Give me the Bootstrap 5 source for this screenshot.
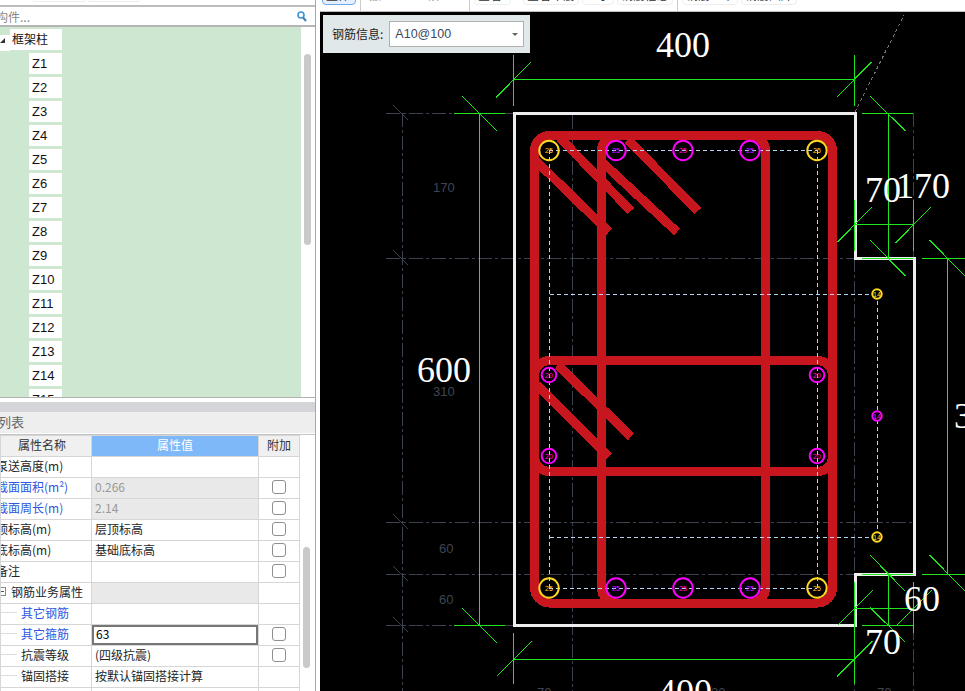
<!DOCTYPE html>
<html>

<head>
  <meta charset="utf-8">
  <meta name="viewport" content="width=device-width">
  <title>钢筋信息</title>
  <link href="https://cdn.jsdelivr.net/npm/bootstrap@5.3.2/dist/css/bootstrap.min.css" rel="stylesheet" type="text/css" />
  <style>
    html, body { height: 691px; overflow: hidden; }
    body { margin: 0; background: #fff; font: 12px/20px "Noto Sans CJK SC", sans-serif; color: #111; }

    .side-pane { width: 320px; height: 691px; flex: none; background: #fff; padding-right: 4px; }
    .side-inner { width: 316px; height: 691px; border-right: 1px solid #a8a8a8; overflow: hidden; }

    .pane-top { height: 7px; border-bottom: 2px solid #bdbdbd; padding-left: 33px; }
    .pane-tab { width: 52px; height: 2px; border: 1px solid #eee; border-top: 0; border-radius: 0 0 3px 3px; margin-right: 3px; }
    .search-row { height: 20px; border-bottom: 2px solid #b5b5b5; padding-right: 8px; }
    .search-text { color: #888; margin-left: -4px; line-height: 17px; }

    .tree-wrap { height: 371px; border-bottom: 1px solid #b0b0b0; }
    .tree-area { width: 301px; background: #cde7d0; padding-top: 2px; overflow: hidden; }
    .tree-row { height: 21px; margin-bottom: 3px; line-height: 21px; }
    .tree-arrow { width: 10px; height: 16px; margin-top: 6px; background: #fff; padding: 3px 0 0 0; }
    .tree-root { width: 52px; height: 21px; background: #fff; padding-left: 2px; line-height: 19px; }
    .tree-leaf { width: 33px; margin-left: 29px; background: #fff; padding-left: 3px; font-family: "Liberation Sans", sans-serif; font-size: 13px; }
    .scroll-track { width: 14px; padding: 0 4px 0 3px; }
    .scroll-thumb { background: #c9c9c9; border-radius: 4px; }
    .thumb-tree { height: 191px; margin-top: 27px; }
    .thumb-grid { height: 121px; margin-top: 112px; }

    .pane-split { height: 10px; margin-top: 4px; background: #d4d5d9; }
    .list-head { height: 21px; background: #eee; color: #666; font-size: 13px; line-height: 19px; margin-bottom: 1px; }
    .list-head span { margin-left: -2px; }
    .list-rule { height: 1px; background: #c4c4c4; }

    .grid-wrap { height: 256px; overflow: hidden; }
    .grid-box { width: 300px; flex: none; }
    .prop-grid { width: 300px; table-layout: fixed; border-collapse: collapse; }
    .prop-grid>:not(caption)>*>* { padding: 0 0 4px; height: 21px; border: 1px solid #d6d6d6; line-height: 15px; vertical-align: middle; white-space: nowrap; overflow: hidden; font-size: 12px; }
    .col-name { width: 91px; }
    .col-val { width: 167px; }
    .col-add { width: 41px; }
    .prop-grid>thead>tr>th { font-weight: 400; text-align: center; background: #f0f0f0; color: #333; }
    .prop-grid>thead>tr>th.head-name { padding-right: 8px; }
    .prop-grid>thead>tr>th.head-active { background: #7eb8f9; color: #fff; }
    .prop-grid>tbody>tr>td.cell-val { padding-left: 3px; }
    .prop-grid>tbody>tr>td.cell-muted { background: #e9e9e9; color: #999; }
    .prop-grid>tbody>tr>td.cell-edit { box-shadow: inset 0 0 0 2px #777; padding-left: 4px; color: #000; }
    .name-cut { display: block; margin-left: -5px; }
    .name-group { display: flex; align-items: center; }
    .name-child { display: flex; align-items: center; }
    .name-child::before { content: ""; width: 16px; margin-right: 4px; border-top: 1px solid #ddd; }
    .link-blue { color: #2f55e0; }
    .tree-minus { width: 5px; height: 9px; margin-right: 5px; border: 1px solid #888; border-left: 0; position: relative; }
    .tree-minus::after { content: ""; position: absolute; left: 0; top: 3px; width: 3px; border-top: 1px solid #555; }
    .form-check-input.add-check { display: block; width: 14px; height: 14px; margin: 1px auto -1px; border: 1px solid #8f8f8f; border-radius: 3px; }

    .main-pane { width: 645px; height: 691px; flex: none; }
    .tool-strip { height: 12px; border-bottom: 1px solid #bcbcbc; padding: 0 0 6px 2px; background: #fff; gap: 3px; }
    .tool-btn { flex: none; height: 22px; padding: 0 3px; border: 1px solid #eee; border-radius: 0 0 4px 4px; font-size: 12px; color: #333; display: flex; align-items: flex-end; overflow: hidden; }
    .tool-btn span { line-height: 14px; margin-bottom: 2px; }
    .tool-btn.tool-on { border-color: #6aa8f0; background: #e4f0ff; width: 34px; }
    .tool-btn.tool-plain { border-color: transparent; color: #999; }
    .tool-plain-a { width: 55px; }
    .tool-plain-b { width: 42px; }
    .tool-first { width: 37px; margin-right: 9px; }
    .tool-sep { flex: none; width: 1px; height: 11px; background: #ccc; margin: 0 1px; align-self: flex-start; }

    .cad-canvas { height: 679px; background: #000; }
    .cad-canvas svg { display: block; }
    .info-box { position: absolute; left: 3px; top: 3px; width: 207px; height: 38px; background: #e1e8ea; padding: 6px 6px 6px 9px; gap: 6px; }
    .info-label { font-size: 12px; line-height: 26px; color: #222; white-space: nowrap; }
    .info-select { width: 135px; flex: none; height: 26px; background: #fff; border: 1px solid #b0b0b0; padding: 0 5px; font: 12.5px/24px "Liberation Sans", sans-serif; color: #3a4a60; }
    .info-caret { width: 0; height: 0; border-left: 3px solid transparent; border-right: 3px solid transparent; border-top: 3px solid #666; }

    .ln { fill: none; shape-rendering: crispEdges; }
    .ln-green { stroke: #1fe61f; stroke-width: 1; }
    .ln-axis { stroke: #3c4250; stroke-width: 1; stroke-dasharray: 14 3 3 3; }
    .ln-tick { stroke: #3c4250; stroke-width: 1; }
    .ln-hint { stroke: #777; stroke-width: 1; stroke-dasharray: 3 3; }
    .ln-wall { stroke: #eee; stroke-width: 3; }
    .ln-bar { stroke: #c8161f; stroke-width: 9; }
    .ln-hook { stroke: #c8161f; stroke-width: 9; }
    .ln-steel { stroke: #b9d2f5; stroke-width: 1; stroke-dasharray: 4 3; }
    .bar-hole { fill: #000; }
    .ring { fill: none; stroke-width: 2; }
    .ring-y { stroke: #ffd820; }
    .ring-m { stroke: #ff00ff; }
    .tag { font: 7px "Liberation Sans", sans-serif; text-anchor: middle; }
    .tag-y { fill: #ffd820; }
    .tag-m { fill: #ff00ff; }
    .dim-big { font: 36px "Liberation Serif", serif; fill: #fff; }
    .dim-small { font: 13px "Liberation Sans", sans-serif; fill: #3f4552; }
  </style>
</head>

<body class="d-flex">
  <aside class="side-pane">
    <div class="side-inner d-flex flex-column">
      <div class="pane-top d-flex">
        <div class="pane-tab"></div>
        <div class="pane-tab"></div>
      </div>
      <div class="search-row d-flex justify-content-between align-items-center">
        <span class="search-text">构件...</span>
        <svg width="10" height="11" viewBox="0 0 10 11">
          <circle cx="4" cy="4" r="3" fill="none" stroke="#3a96d6" stroke-width="1.6" />
          <path d="M6 6.5L9 10" stroke="#3a7fb5" stroke-width="2" />
        </svg>
      </div>

      <div class="tree-wrap d-flex">
        <div class="tree-area">
          <div class="tree-row d-flex align-items-start">
            <div class="tree-arrow">
              <svg class="d-block" width="6" height="6" viewBox="0 0 6 6">
                <path d="M0 5H5V0Z" fill="#333" />
              </svg>
            </div>
            <div class="tree-root">框架柱</div>
          </div>
          <div class="tree-row tree-leaf">Z1</div>
          <div class="tree-row tree-leaf">Z2</div>
          <div class="tree-row tree-leaf">Z3</div>
          <div class="tree-row tree-leaf">Z4</div>
          <div class="tree-row tree-leaf">Z5</div>
          <div class="tree-row tree-leaf">Z6</div>
          <div class="tree-row tree-leaf">Z7</div>
          <div class="tree-row tree-leaf">Z8</div>
          <div class="tree-row tree-leaf">Z9</div>
          <div class="tree-row tree-leaf">Z10</div>
          <div class="tree-row tree-leaf">Z11</div>
          <div class="tree-row tree-leaf">Z12</div>
          <div class="tree-row tree-leaf">Z13</div>
          <div class="tree-row tree-leaf">Z14</div>
          <div class="tree-row tree-leaf">Z15</div>
        </div>
        <div class="scroll-track">
          <div class="scroll-thumb thumb-tree"></div>
        </div>
      </div>

      <div class="pane-split"></div>
      <div class="list-head"><span>列表</span></div>
      <div class="list-rule"></div>

      <div class="grid-wrap d-flex">
        <div class="grid-box">
          <table class="table prop-grid mb-0">
            <colgroup>
              <col class="col-name">
              <col class="col-val">
              <col class="col-add">
            </colgroup>
            <thead>
              <tr>
                <th class="head-name">属性名称</th>
                <th class="head-active">属性值</th>
                <th>附加</th>
              </tr>
            </thead>
            <tbody>
              <tr>
                <td><span class="name-cut">泵送高度(m)</span></td>
                <td class="cell-val"></td>
                <td></td>
              </tr>
              <tr>
                <td><span class="name-cut link-blue">截面面积(m²)</span></td>
                <td class="cell-val cell-muted">0.266</td>
                <td><input class="form-check-input add-check" type="checkbox"></td>
              </tr>
              <tr>
                <td><span class="name-cut link-blue">截面周长(m)</span></td>
                <td class="cell-val cell-muted">2.14</td>
                <td><input class="form-check-input add-check" type="checkbox"></td>
              </tr>
              <tr>
                <td><span class="name-cut">顶标高(m)</span></td>
                <td class="cell-val">层顶标高</td>
                <td><input class="form-check-input add-check" type="checkbox"></td>
              </tr>
              <tr>
                <td><span class="name-cut">底标高(m)</span></td>
                <td class="cell-val">基础底标高</td>
                <td><input class="form-check-input add-check" type="checkbox"></td>
              </tr>
              <tr>
                <td><span class="name-cut">备注</span></td>
                <td class="cell-val"></td>
                <td><input class="form-check-input add-check" type="checkbox"></td>
              </tr>
              <tr>
                <td><span class="name-group"><span class="tree-minus"></span>钢筋业务属性</span></td>
                <td class="cell-val cell-muted"></td>
                <td></td>
              </tr>
              <tr>
                <td><span class="name-child link-blue">其它钢筋</span></td>
                <td class="cell-val"></td>
                <td></td>
              </tr>
              <tr>
                <td><span class="name-child link-blue">其它箍筋</span></td>
                <td class="cell-edit">63</td>
                <td><input class="form-check-input add-check" type="checkbox"></td>
              </tr>
              <tr>
                <td><span class="name-child">抗震等级</span></td>
                <td class="cell-val">(四级抗震)</td>
                <td><input class="form-check-input add-check" type="checkbox"></td>
              </tr>
              <tr>
                <td><span class="name-child">锚固搭接</span></td>
                <td class="cell-val">按默认锚固搭接计算</td>
                <td></td>
              </tr>
              <tr>
                <td></td>
                <td class="cell-val"></td>
                <td></td>
              </tr>
            </tbody>
          </table>
        </div>
        <div class="scroll-track">
          <div class="scroll-thumb thumb-grid"></div>
        </div>
      </div>
    </div>
  </aside>

  <main class="main-pane d-flex flex-column">
    <div class="tool-strip d-flex align-items-end">
      <div class="tool-btn tool-on"><span>整体</span></div>
      <div class="tool-sep"></div>
      <div class="tool-btn tool-plain tool-plain-a"><span>撤</span></div>
      <div class="tool-btn tool-plain tool-plain-b"><span>恢</span></div>
      <div class="tool-sep"></div>
      <div class="tool-btn tool-first"><span>查看</span></div>
      <div class="tool-btn"><span>查看布筋</span></div>
      <div class="tool-btn"><span>显示</span></div>
      <div class="tool-btn"><span>钢筋信息</span></div>
      <div class="tool-sep"></div>
      <div class="tool-btn"><span>钢筋三维</span></div>
      <div class="tool-btn"><span>钢筋图库</span></div>
    </div>

    <div class="cad-canvas position-relative">
      <svg width="645" height="679" viewBox="320 12 645 679">
        <!-- axis lines -->
        <path class="ln ln-axis" d="M386 113.5H513M386 258.5H855M386 522.5H913M386 574.5H913M386 625.5H513M402.5 113V691M572.5 115V691M854.5 258V691M913.5 113V258M913.5 626V691" />
        <path class="ln ln-tick" d="M393 105L408 120M393 250L408 265M393 514L408 529M393 566L408 581M393 617L408 632" />
        <path class="ln ln-hint" d="M855 112L904 15" />

        <!-- section outline -->
        <path class="ln ln-wall" d="M514.5 113.5H855V258.5H914V574.5H855V625.5H514.5Z" />

        <!-- dimension lines -->
        <path class="ln ln-green" d="M513.5 79.5H854.5M513.5 55V106M854.5 55V106M496 97.5L531 62M836.5 97.5L871.5 62
          M479.5 113.5V625.5M454 113.5H505M462.5 96.5L497.5 131.5M454 625.5H505M462.5 608.5L497.5 643.5
          M513.5 659.5H854.5M513.5 633V684M496.5 676.5L531.5 641.5M854.5 582V684M837 676.5L872.5 641
          M854.5 608.5H913.5M913.5 582V633M838 625L873 590M897 625L932 590
          M888.5 574.5V625.5M862 574.5H913M862 625.5H913M870 555L905.5 591.5M870 607.5L905.5 642.5
          M947.5 258.5V574.5M922 574.5H965M922 258.5H965M929.5 555L965 591M929.5 240L965 276
          M862 113.5H913M888.5 113.5V258.5M862 258.5H913M870 96L905.5 131M870 240L905.5 276
          M854.5 224.5H913.5M854.5 200V251M913.5 200V251M837.5 242L872 207M895.5 243L931 207" />

        <!-- stirrups -->
        <rect class="ln ln-bar" x="534.5" y="135.5" width="298" height="467.5" rx="15" />
        <rect class="ln ln-bar" x="601.5" y="135.5" width="164" height="467.5" rx="15" />
        <rect class="ln ln-bar" x="534.5" y="360.5" width="298" height="111" rx="15" />
        <path class="ln ln-hook" d="M535 160L609 232M560 138L631 211M602 162L677 232M628 140L698 211M558 365L631 437M537 385L609 457" />

        <!-- bar holes -->
        <g class="bar-hole">
          <circle cx="549" cy="150.5" r="9.7" />
          <circle cx="616" cy="150.5" r="9.7" />
          <circle cx="683" cy="150.5" r="9.7" />
          <circle cx="750" cy="150.5" r="9.7" />
          <circle cx="817" cy="150.5" r="9.7" />
          <circle cx="549" cy="588" r="9.7" />
          <circle cx="616" cy="588" r="9.7" />
          <circle cx="683" cy="588" r="9.7" />
          <circle cx="750" cy="588" r="9.7" />
          <circle cx="817" cy="588" r="9.7" />
          <circle cx="549" cy="375" r="7.3" />
          <circle cx="549" cy="456" r="7.3" />
          <circle cx="817" cy="375" r="7.3" />
          <circle cx="817" cy="456" r="7.3" />
        </g>

        <!-- longitudinal steel -->
        <path class="ln ln-steel" d="M549 150.5H817M549 588H817M549.5 150V588M817.5 150V588M550 294.5H877M550 537.5H877M877.5 294V537" />

        <!-- bars -->
        <g class="ring ring-y">
          <circle cx="549" cy="150.5" r="9.7" />
          <circle cx="817" cy="150.5" r="9.7" />
          <circle cx="549" cy="588" r="9.7" />
          <circle cx="817" cy="588" r="9.7" />
        </g>
        <g class="ring ring-m">
          <circle cx="616" cy="150.5" r="9.7" />
          <circle cx="683" cy="150.5" r="9.7" />
          <circle cx="750" cy="150.5" r="9.7" />
          <circle cx="616" cy="588" r="9.7" />
          <circle cx="683" cy="588" r="9.7" />
          <circle cx="750" cy="588" r="9.7" />
          <circle cx="549" cy="375" r="7.3" />
          <circle cx="549" cy="456" r="7.3" />
          <circle cx="817" cy="375" r="7.3" />
          <circle cx="817" cy="456" r="7.3" />
        </g>
        <circle class="bar-hole" cx="877" cy="294" r="4.7" />
        <circle class="bar-hole" cx="877" cy="416" r="4.7" />
        <circle class="bar-hole" cx="877" cy="537" r="4.7" />
        <circle class="ring ring-y" cx="877" cy="294" r="4.7" />
        <circle class="ring ring-m" cx="877" cy="416" r="4.7" />
        <circle class="ring ring-y" cx="877" cy="537" r="4.7" />

        <g class="tag tag-y">
          <text x="549" y="153">25</text>
          <text x="817" y="153">25</text>
          <text x="549" y="590.5">25</text>
          <text x="817" y="590.5">25</text>
          <text x="877" y="296.5">14</text>
          <text x="877" y="539.5">14</text>
        </g>
        <g class="tag tag-m">
          <text x="616" y="153">25</text>
          <text x="683" y="153">25</text>
          <text x="750" y="153">25</text>
          <text x="616" y="590.5">25</text>
          <text x="683" y="590.5">25</text>
          <text x="750" y="590.5">25</text>
          <text x="549" y="377.5">20</text>
          <text x="549" y="458.5">20</text>
          <text x="817" y="377.5">20</text>
          <text x="817" y="458.5">20</text>
          <text x="877" y="418.5">14</text>
        </g>

        <!-- faint dimensions -->
        <g class="dim-small">
          <text x="433" y="192">170</text>
          <text x="433" y="396">310</text>
          <text x="439" y="553">60</text>
          <text x="439" y="604">60</text>
          <text x="537" y="697">70</text>
          <text x="711" y="697">30</text>
          <text x="877" y="697">70</text>
        </g>

        <!-- dimension text -->
        <g class="dim-big">
          <text x="656" y="57">400</text>
          <text x="865" y="202">70</text>
          <text x="896" y="198">170</text>
          <text x="417" y="382">600</text>
          <text x="954" y="428">310</text>
          <text x="904" y="611">60</text>
          <text x="865" y="654">70</text>
          <text x="658" y="704">400</text>
        </g>
      </svg>

      <div class="info-box d-flex">
        <span class="info-label">钢筋信息:</span>
        <div class="info-select d-flex justify-content-between align-items-center">
          <span>A10@100</span>
          <span class="info-caret"></span>
        </div>
      </div>
    </div>
  </main>

  <script src="https://cdn.jsdelivr.net/npm/bootstrap@5.3.2/dist/js/bootstrap.bundle.min.js"></script>
</body>

</html>
